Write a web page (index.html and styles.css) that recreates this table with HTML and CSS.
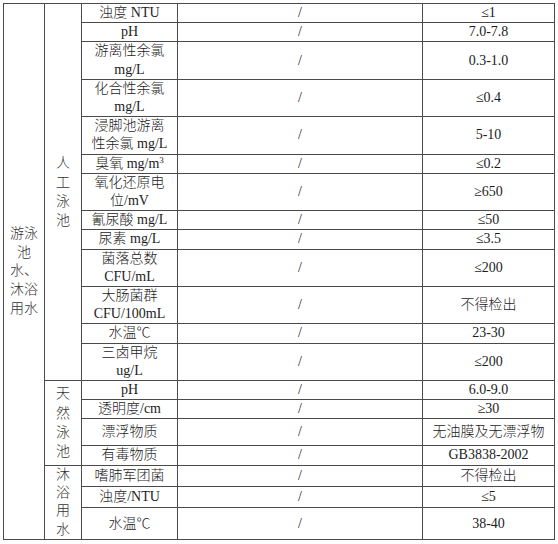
FILE: index.html
```html
<!DOCTYPE html>
<html lang="zh-CN">
<head>
<meta charset="utf-8">
<title>游泳池水、沐浴用水</title>
<link rel="stylesheet" href="styles.css">
</head>
<body>
<table class="std">
<colgroup>
<col class="c1"><col class="c2"><col class="c3"><col class="c4"><col class="c5">
</colgroup>
<tbody>
<tr><td rowspan="20" class="cat">游泳<br>池<br>水、<br>沐浴<br>用水</td><td rowspan="13" class="sub">人<br>工<br>泳<br>池</td><td>浊度 NTU</td><td>/</td><td>≤1</td></tr>
<tr><td>pH</td><td>/</td><td>7.0-7.8</td></tr>
<tr><td>游离性余氯<br>mg/L</td><td>/</td><td>0.3-1.0</td></tr>
<tr><td>化合性余氯<br>mg/L</td><td>/</td><td>≤0.4</td></tr>
<tr><td>浸脚池游离<br>性余氯 mg/L</td><td>/</td><td>5-10</td></tr>
<tr><td>臭氧 mg/m<sup>3</sup></td><td>/</td><td>≤0.2</td></tr>
<tr><td>氧化还原电<br>位/mV</td><td>/</td><td>≥650</td></tr>
<tr><td>氰尿酸 mg/L</td><td>/</td><td>≤50</td></tr>
<tr><td>尿素 mg/L</td><td>/</td><td>≤3.5</td></tr>
<tr><td>菌落总数<br>CFU/mL</td><td>/</td><td>≤200</td></tr>
<tr><td>大肠菌群<br>CFU/100mL</td><td>/</td><td>不得检出</td></tr>
<tr><td>水温℃</td><td>/</td><td>23-30</td></tr>
<tr><td>三卤甲烷<br>ug/L</td><td>/</td><td>≤200</td></tr>
<tr><td rowspan="4" class="sub">天<br>然<br>泳<br>池</td><td>pH</td><td>/</td><td>6.0-9.0</td></tr>
<tr><td>透明度/cm</td><td>/</td><td>≥30</td></tr>
<tr class="tall"><td>漂浮物质</td><td>/</td><td>无油膜及无漂浮物</td></tr>
<tr><td>有毒物质</td><td>/</td><td>GB3838-2002</td></tr>
<tr><td rowspan="3" class="sub tight">沐<br>浴<br>用<br>水</td><td>嗜肺军团菌</td><td>/</td><td>不得检出</td></tr>
<tr><td>浊度/NTU</td><td>/</td><td>≤5</td></tr>
<tr class="last"><td>水温℃</td><td>/</td><td>38-40</td></tr>
</tbody>
</table>
</body>
</html>
```
FILE: styles.css
```css
html, body {
  margin: 0;
  padding: 0;
  background: #ffffff;
}
body {
  padding: 3px 0 0 3px;
}
.std {
  border-collapse: collapse;
  table-layout: fixed;
  width: 551px;
  font-family: "Liberation Serif", "Noto Sans CJK SC", serif;
  font-size: 14px;
  font-weight: 300;
  line-height: 18.2px;
  color: #1c1c1c;
}
.c1 { width: 41px; }
.c2 { width: 37px; }
.c3 { width: 96px; }
.c4 { width: 245px; }
.c5 { width: 132px; }
.std td {
  border: 1px solid #4a4a4a;
  padding: 0;
  text-align: center;
  vertical-align: middle;
  white-space: nowrap;
}
.std td.cat {
  line-height: 18.7px;
  color: #333;
}
.std td.sub {
  line-height: 19.3px;
  color: #333;
}
.std td.tight {
  line-height: 18.4px;
}
.std sup {
  font-size: 9px;
  line-height: 0;
  vertical-align: 5px;
}
.tall td {
  height: 26px;
}
.last td {
  height: 31px;
}
```
